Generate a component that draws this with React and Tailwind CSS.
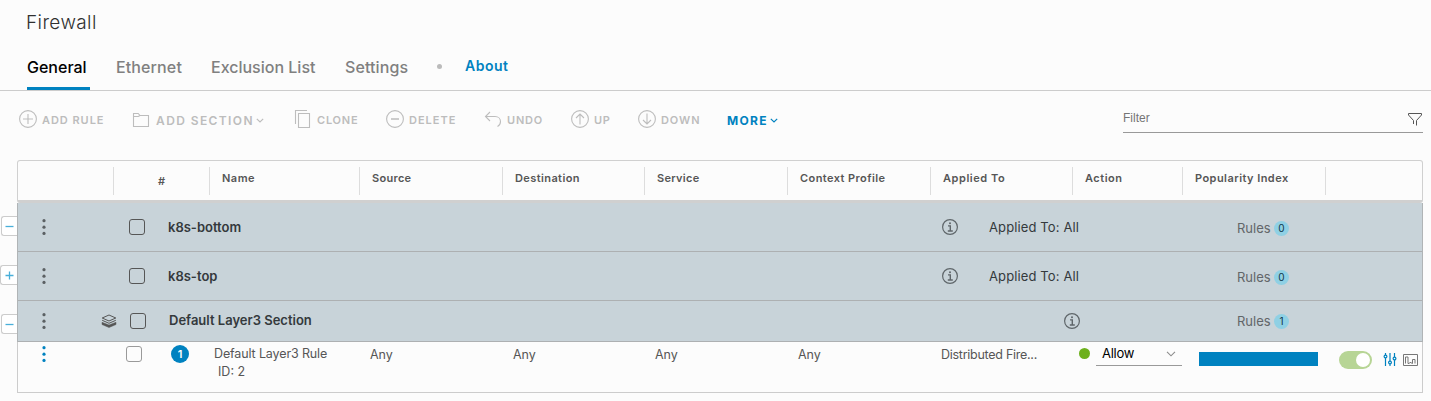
import React from "react";

function Icon({ name, className = "" }) {
  const paths = {
    plus: <><circle cx="9" cy="9" r="8.4" /><path d="M4 9h10M9 4v10" /></>,
    minus: <><circle cx="9" cy="9" r="8.4" /><path d="M5 9h8" strokeWidth="1.5" /></>,
    up: <><circle cx="9" cy="9" r="8.4" /><path d="M9 14.5V4.5M5 8l4-4 4 4" /></>,
    down: <><circle cx="9" cy="9" r="8.4" /><path d="M9 3.5v10M5 10l4 4 4-4" /></>,
    folder: <path d="M1.5 16.5V3.5h4.7l1.8 2h8.500V16.500ZM1.500 6.500h4.800l1.700-1" />,
    clone: <><path d="M1.5 14V.5h11.500" /><path d="M4.5 3.5h11V17.500h-11Z" /></>,
    undo: <path d="M6 2 1.5 6.500 6 11M1.5 6.500H11c3.500 0 5.500 2.500 5.500 5 0 2.200-1 4-3 5" />,
  };
  return (
    <svg className={`shrink-0 ${className}`} width="18" height="19" viewBox="0 0 18 19" fill="none" stroke="currentColor" strokeWidth="1.1">
      {paths[name]}
    </svg>
  );
}

function Caret({ className = "" }) {
  return (
    <svg className={className} width="8" height="5" viewBox="0 0 8 5" fill="none" stroke="currentColor" strokeWidth="1.2">
      <path d="M.8 .8 4 4 7.200 .8" />
    </svg>
  );
}

function Info() {
  return (
    <svg width="16" height="16" viewBox="0 0 16 16" fill="none" stroke="#5f666a" strokeWidth="1.200">
      <circle cx="8" cy="8" r="7.400" />
      <path d="M6 6.900h2.300v5M5.800 12h5" strokeWidth="1.400" />
      <circle cx="8" cy="4.200" r="1" fill="#5f666a" stroke="none" />
    </svg>
  );
}

function Dots() {
  return (
    <svg width="4" height="16" viewBox="0 0 4 16" fill="currentColor">
      <circle cx="2" cy="1.700" r="1.600" />
      <circle cx="2" cy="8.200" r="1.600" />
      <circle cx="2" cy="14.400" r="1.600" />
    </svg>
  );
}

function Toggle({ open, className }) {
  return (
    <div className={`flex h-5 shrink-0 items-center justify-end rounded-l-[3px] border border-r-0 border-[#ccc] bg-white pr-[3px] ${className}`}>
      <svg width="9" height="9" viewBox="0 0 9 9" stroke="#49afd9" strokeWidth="1.300">
        <path d={open ? "M.5 4.500h8" : "M.5 4.500h8M4.500 .5v8"} />
      </svg>
    </div>
  );
}

function Layers() {
  return (
    <svg width="16" height="14" viewBox="0 0 16 14" fill="none" stroke="#565656" strokeWidth="1">
      <path d="M1.200 4 8 1l6.800 3L8 7Z" />
      <path d="M1.200 6.300 8 9.300l6.800-3" />
      <path d="M1 8.300 8 11l7-2.700v2.200L8 13.500l-7-3Z" fill="#565656" strokeWidth=".5" />
    </svg>
  );
}

const columns = [
  ["Name", "w-[150px]", "tracking-[0.5px]"],
  ["Source", "w-[143px]", "tracking-[0.3px]"],
  ["Destination", "w-[142px]", "tracking-[0.4px]"],
  ["Service", "w-[143px]", "tracking-[0.3px]"],
  ["Context Profile", "w-[143px]", "tracking-[0.42px]"],
  ["Applied To", "w-[142px]", "tracking-[0.55px]"],
  ["Action", "w-[110px]", "tracking-[0.5px]"],
  ["Popularity Index", "w-[143px]", "tracking-[0.45px]"],
  ["", "w-[96px]", ""],
];

function Rules({ count }) {
  return (
    <div className="flex items-center">
      <span className="w-[37px] text-[13px] leading-5 text-[#626669]">Rules</span>
      <span className="flex size-[15px] items-center justify-center rounded-full bg-[#8fd0e4] text-[10px] text-[#10364a]">{count}</span>
    </div>
  );
}

function Section({ name, layered, height, count }) {
  return (
    <div className={`flex items-center border-b border-[#adb0b2] bg-[#c8d3d9] ${height}`}>
      <div className={`w-[66px] pl-6 text-[#5b6063] ${layered ? "pb-px" : ""}`}><Dots /></div>
      <div className={`flex items-center justify-end ${layered ? "w-[62px] gap-[13px]" : "w-[61px]"}`}>
        {layered && <Layers />}
        <div className="size-4 shrink-0 rounded-[3px] border border-[#565656]" />
      </div>
      <div className={`flex-1 pl-[23px] text-[13px] font-semibold text-[#34393c] ${layered ? "" : "pt-[2px]"}`}>{name}</div>
      {layered ? (
        <div className="w-[173px]"><Info /></div>
      ) : (
        <>
          <div className="w-[47px]"><Info /></div>
          <div className="w-[248px] pt-[2px] text-[13px] tracking-[0.12px] text-[#34393c]">Applied To: All</div>
        </>
      )}
      <div className={`w-[185px] ${layered ? "" : "pt-[2px]"}`}><Rules count={count} /></div>
    </div>
  );
}

function Action({ icon, label, width, labelClass = "text-[11px] tracking-[1.050px]", gap = "gap-[5px]", caret }) {
  return (
    <div className={`flex h-[19px] shrink-0 items-center font-semibold text-[#bdbdbd] ${width} ${gap}`}>
      <Icon name={icon} />
      <span className={`whitespace-nowrap pt-[2px] ${labelClass}`}>{label}</span>
      {caret && <Caret className="-ml-[4px] mt-px shrink-0" />}
    </div>
  );
}

export default function App() {
  return (
    <div className="h-[401px] w-[1431px] overflow-hidden bg-[#fcfcfc] font-['Inter','Liberation_Sans',sans-serif] text-[#565656]">
      <h1 className="h-[46px] pl-[26px] pt-[9px] text-[19px] font-light leading-7 tracking-[0.4px] text-[#303030]">Firewall</h1>

      <nav className="flex h-[45px] items-stretch border-b border-[#ccc] pl-[27px] text-[16px] font-medium text-[#808080]">
        <div className="w-[63px] border-b-[3px] border-[#0082c0] pt-[9px] leading-6 text-black">General</div>
        <div className="w-[95px] pl-[26px] pt-[9px] leading-6 tracking-[0.12px]">Ethernet</div>
        <div className="w-[134px] whitespace-nowrap pl-[26px] pt-[9px] leading-6">Exclusion List</div>
        <div className="w-[118px] pl-[26px] pt-[9px] leading-6 tracking-[0.1px]">Settings</div>
        <div className="mt-[18px] size-[5px] rounded-full bg-[#bbb]" />
        <div className="pl-[23px] pt-2 text-[14px] font-semibold leading-6 tracking-[0.500px] text-[#0082c0]">About</div>
      </nav>

      <div className="flex h-[69px] items-start pl-[19px] pr-2">
        <div className="flex flex-1 pt-[19px]">
          <Action icon="plus" label="ADD RULE" width="w-[113px]" labelClass="text-[11px] tracking-[0.950px]" />
          <Action icon="folder" label="ADD SECTION" width="w-[162px]" gap="gap-[6px]" labelClass="text-[12px] tracking-[1.400px]" caret />
          <Action icon="clone" label="CLONE" width="w-[92px]" labelClass="text-[11px] tracking-[0.800px]" />
          <Action icon="minus" label="DELETE" width="w-[98px]" labelClass="text-[11px] tracking-[1px]" />
          <Action icon="undo" label="UNDO" width="w-[87px]" labelClass="text-[11px] tracking-[0.800px]" />
          <Action icon="up" label="UP" width="w-[67px]" labelClass="text-[11px] tracking-[0.600px]" />
          <Action icon="down" label="DOWN" width="w-[89px]" labelClass="text-[11px] tracking-[0.900px]" />
          <div className="flex h-[19px] items-center gap-[2px] text-[12px] font-bold tracking-[1.300px] text-[#0082c0]">
            <span className="pt-[3px]">MORE</span>
            <Caret className="mt-px" />
          </div>
        </div>
        <div className="mt-[14px] flex h-7 w-[300px] justify-between border-b border-[#999]">
          <span className="pt-1 font-['Liberation_Sans',sans-serif] text-[12px] leading-[18px] text-[#757575]">Filter</span>
          <svg className="mt-[8px]" width="15" height="14" viewBox="0 0 15 14" fill="none" stroke="#565656">
            <path d="M8.500 12.500V7.500L13.500 2V.5H.5V2l5 5.500V11" />
          </svg>
        </div>
      </div>

      <div className="flex">
        <div className="flex w-[17px] shrink-0 flex-col items-end pt-14">
          <Toggle open className="w-4" />
          <Toggle className="mt-[29px] w-[17px] pr-1" />
          <Toggle open className="mt-[29px] w-4" />
        </div>

        <div className="w-[1406px] shrink-0">
          <div className="flex h-[43px] items-start rounded-[3px] border border-b-[3px] border-[#d0d0d0] pt-[6px] text-[11px] font-semibold text-[#565656]">
            <div className="w-[95px]" />
            <div className="h-7 w-24 border-l border-[#ddd] pl-[44px] pt-[6px] leading-4">#</div>
            {columns.map(([label, width, tracking], i) => (
              <div key={i} className={`h-7 shrink-0 whitespace-nowrap border-l border-[#ddd] pl-3 pt-[3px] leading-4 ${width} ${tracking}`}>{label}</div>
            ))}
          </div>

          <div className="border-x border-[#b0b4b6]">
            <Section name="k8s-bottom" height="h-[49px]" count={0} />
            <Section name="k8s-top" height="h-[49px]" count={0} />
            <Section name="Default Layer3 Section" height="h-[41px]" count={1} layered />
          </div>

          <div className="flex h-[51px] items-start border border-t-0 border-[#ccc] text-[12.500px]">
            <div className="w-[91px] pl-6 pt-1 text-[#0082c0]"><Dots /></div>
            <div className="w-[45px] pl-[17px] pt-1"><div className="size-4 rounded-[3px] border border-[#9a9a9a]" /></div>
            <div className="w-[60px] pl-[17px] pt-[3px]">
              <div className="flex size-[18px] items-center justify-center rounded-full bg-[#0082c0] text-[11px] font-semibold text-white">1</div>
            </div>
            <div className="w-[156px] pt-[3px] leading-[18px]">
              <div className="tracking-[-0.130px]">Default Layer3 Rule</div>
              <div className="pl-1">ID: 2</div>
            </div>
            <div className="w-[143px] pt-1 leading-[18px]">Any</div>
            <div className="w-[142px] pt-1 leading-[18px]">Any</div>
            <div className="w-[143px] pt-1 leading-[18px]">Any</div>
            <div className="w-[143px] pt-1 leading-[18px]">Any</div>
            <div className="w-[138px] pt-1 leading-[18px] tracking-[-0.270px]">Distributed Fire...</div>
            <div className="w-[17px] pt-[6px]"><div className="size-[11px] rounded-full bg-[#6db01c]" /></div>
            <div className="flex h-6 w-[86px] items-center justify-between border-b border-[#9a9a9a] pl-[6px] pr-[6px] text-[13px] tracking-[-0.250px] text-black">
              <span className="pt-px">Allow</span>
              <svg width="10" height="6" viewBox="0 0 10 6" fill="none" stroke="#8c8c8c" strokeWidth="1.100"><path d="m1 .8 4 4 4-4" /></svg>
            </div>
            <div className="ml-[17px] mt-[10px] h-[14px] w-[119px] bg-[#0082c0]" />
            <div className="ml-[21px] mt-[9px] flex h-[18px] w-[33px] items-center justify-end rounded-full bg-[#b7d595] pr-[2px]">
              <div className="size-[14px] rounded-full bg-white" />
            </div>
            <svg className="ml-[11px] mt-[11px]" width="14" height="13" viewBox="0 0 14 13" fill="none" stroke="#0082c0" strokeWidth="1.200">
              <path d="M2.500 0v2M2.500 5v8M7 0v8M7 11v2M11.500 0v4M11.500 7v6" />
              <circle cx="2.500" cy="3.500" r="1.400" /><circle cx="7" cy="9.500" r="1.400" /><circle cx="11.500" cy="5.500" r="1.400" />
            </svg>
            <svg className="ml-[6px] mt-[12px]" width="15" height="12" viewBox="0 0 15 12" fill="none" stroke="#777">
              <path d="M.5 .5h14v11H.5Z" />
              <path d="M2.500 9.500v-6.500h2.500v6.500M5 9.500h1.500M6.500 8.500h2M8.500 9.500h1M9.500 9.500v-4h2.500v4" />
            </svg>
          </div>
        </div>
      </div>
    </div>
  );
}
